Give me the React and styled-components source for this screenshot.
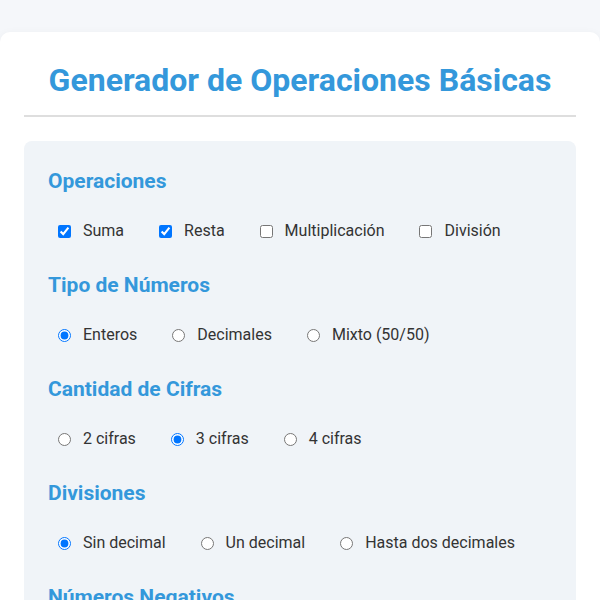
import React, { useState } from 'react';
import styled, { createGlobalStyle } from 'styled-components';

const GlobalStyle = createGlobalStyle`
  body {
    margin: 0;
    background: #f5f7fa;
    font-family: Roboto, "Liberation Sans", Arial, sans-serif;
    color: #333;
  }
`;

const Page = styled.div`
  padding-top: 32px;
`;

const Card = styled.div`
  background: #fff;
  border-radius: 10px;
  padding: 29px 24px 30px;
  box-shadow: 0 2px 10px rgba(0, 0, 0, 0.05);
`;

const Title = styled.h1`
  margin: 0 0 24px;
  padding-bottom: 16px;
  border-bottom: 2px solid #dedede;
  text-align: center;
  font-size: 32px;
  line-height: 38px;
  font-weight: 700;
  color: #3498db;
`;

const Panel = styled.div`
  background: #f0f4f8;
  border-radius: 8px;
  padding: 28px 24px;
`;

const Section = styled.div`
  margin-bottom: 30px;
`;

const Heading = styled.h2`
  margin: 0 0 26px;
  font-size: 21px;
  line-height: 24px;
  font-weight: 700;
  color: #3498db;
`;

const Options = styled.div`
  display: flex;
  flex-wrap: wrap;
  gap: 10px 25px;
`;

const Option = styled.label`
  display: flex;
  align-items: center;
  font-size: 16px;
  line-height: 24px;
  color: #333;
  cursor: pointer;

  input {
    width: 13px;
    height: 13px;
    margin: 0 12px 0 10px;
  }
`;

const sections = [
  { title: 'Operaciones', type: 'checkbox', name: 'ops', options: ['Suma', 'Resta', 'Multiplicación', 'División'], value: ['Suma', 'Resta'] },
  { title: 'Tipo de Números', type: 'radio', name: 'tipo', options: ['Enteros', 'Decimales', 'Mixto (50/50)'], value: 'Enteros' },
  { title: 'Cantidad de Cifras', type: 'radio', name: 'cifras', options: ['2 cifras', '3 cifras', '4 cifras'], value: '3 cifras' },
  { title: 'Divisiones', type: 'radio', name: 'div', options: ['Sin decimal', 'Un decimal', 'Hasta dos decimales'], value: 'Sin decimal' },
  { title: 'Números Negativos', type: 'radio', name: 'neg', options: ['No permitir', 'Permitir'], value: 'No permitir' },
];

function Group({ section }) {
  const [value, setValue] = useState(section.value);
  const isChecked = (opt) => (section.type === 'checkbox' ? value.includes(opt) : value === opt);
  const toggle = (opt) => {
    if (section.type === 'checkbox') {
      setValue(value.includes(opt) ? value.filter((v) => v !== opt) : [...value, opt]);
    } else {
      setValue(opt);
    }
  };
  return (
    <Section>
      <Heading>{section.title}</Heading>
      <Options>
        {section.options.map((opt) => (
          <Option key={opt}>
            <input type={section.type} name={section.name} checked={isChecked(opt)} onChange={() => toggle(opt)} />
            {opt}
          </Option>
        ))}
      </Options>
    </Section>
  );
}

export default function App() {
  return (
    <Page>
      <GlobalStyle />
      <Card>
        <Title>Generador de Operaciones Básicas</Title>
        <Panel>
          {sections.map((s) => (
            <Group key={s.name} section={s} />
          ))}
        </Panel>
      </Card>
    </Page>
  );
}
